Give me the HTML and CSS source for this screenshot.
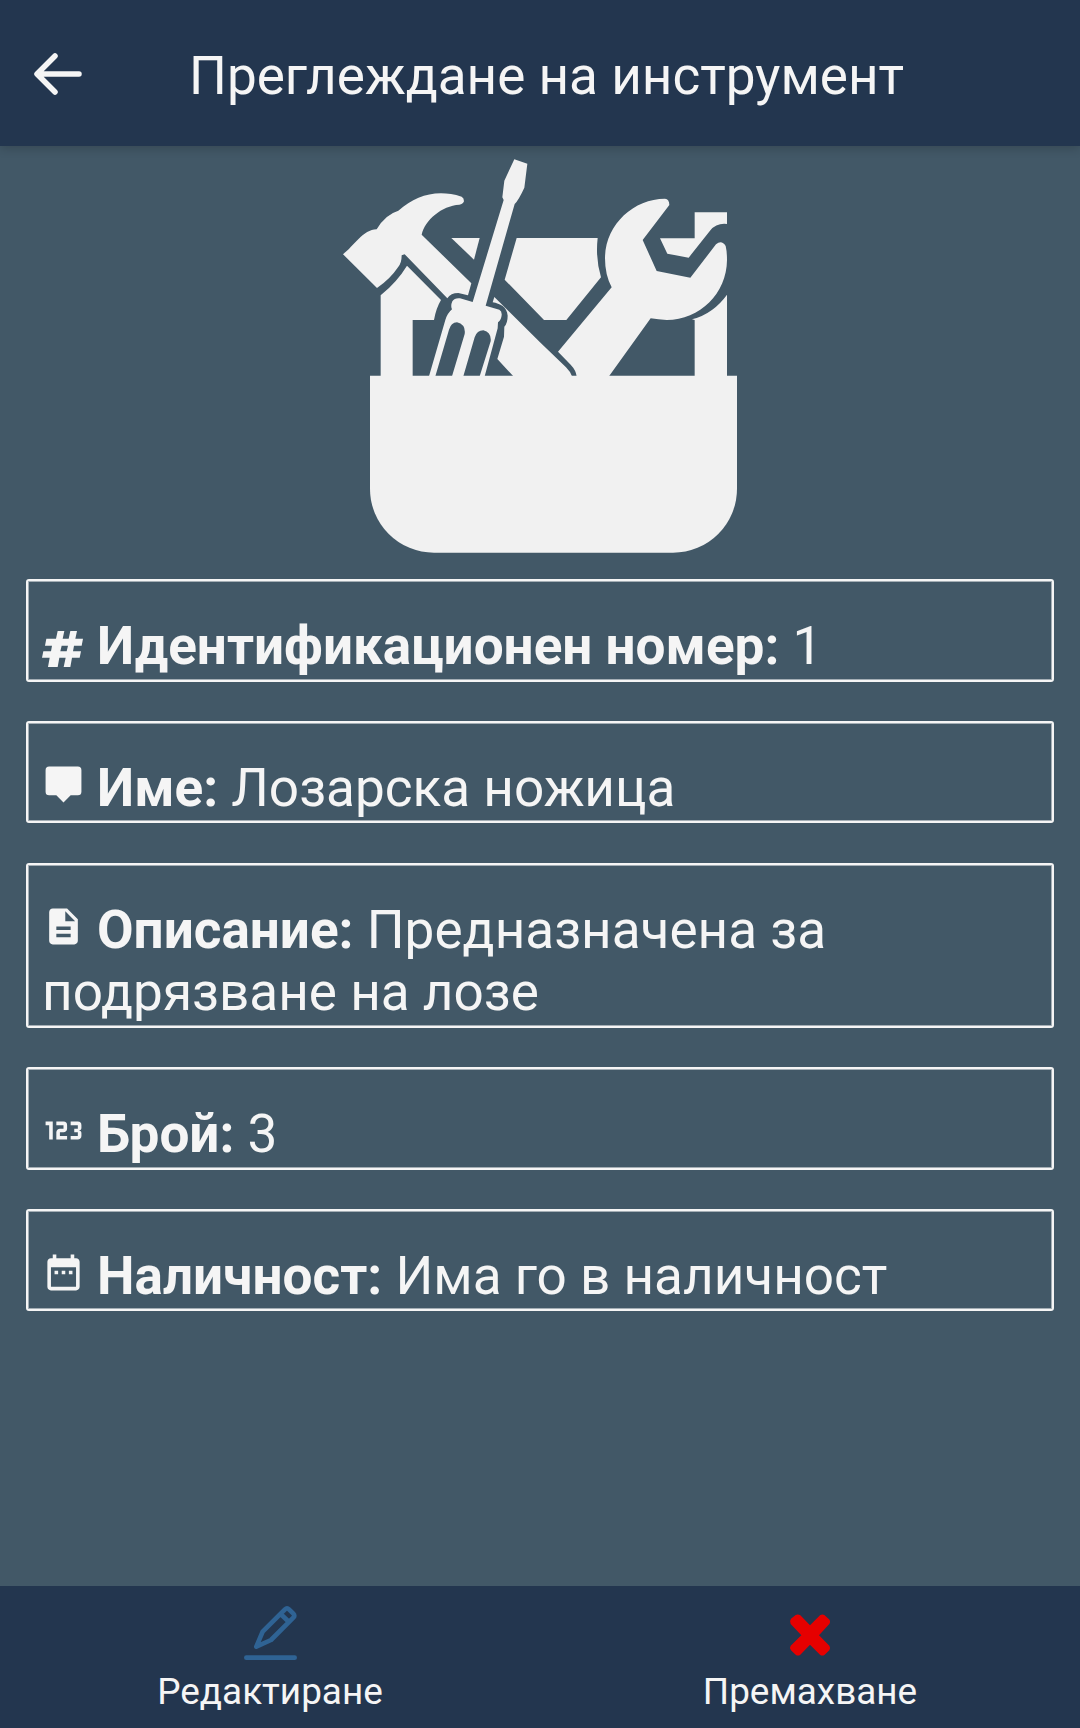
FILE: index.html
```html
<!DOCTYPE html>
<html lang="bg">
<head>
<meta charset="utf-8">
<title>Преглеждане на инструмент</title>
<link rel="stylesheet" href="styles.css">
</head>
<body>
<div class="screen">
  <header class="header">
    <svg class="back" viewBox="0 0 48 42" width="48" height="42"><path d="M21 3L3 21L21 39M4 21H45"/></svg>
    <h1 class="title">Преглеждане на инструмент</h1>
  </header>
  <main class="content">
    <svg class="toolbox" viewBox="0 18 1260 1299" width="420" height="433">
      <path d="M120 707H1221V1046A192 192 0 0 1 1029 1238H312A192 192 0 0 1 120 1046Z"/>
      <path d="M553 58L592 71L583 143Q566 180 554 192L467 497L508 509Q516 513 515 525Q514 540 504 547L503 565L464 709H449L482 604Q485 578 460 571Q441 571 434 592L400 709H366L404 582Q408 554 381 547Q363 548 357 569L316 709H297L346 540Q352 520 366 508Q361 498 367 484Q374 473 390 475L428 486L521 180L517 172L523 122Z"/>
      <path d="M39 343C72 318 99 269 140 268Q165 224 205 212C260 165 320 147 395 170Q402 174 402 184Q399 193 388 194C335 197 285 240 275 284L424 430L414 466L385 459Q362 459 352 475L224 343L215 346Q215 370 204 382Q180 418 141 444Z"/>
      <path d="M152 466Q202 425 231 377L333 480Q318 505 312 540H248V709H152Z"/>
      <path d="M364 294H449L432 359Z"/>
      <path d="M560 294H803Q796 355 813 412L709 540H642L524 419Z"/>
      <path d="M493 471L630 607L708 682Q722 696 726 709H550L502 657L522 590L523 560Q533 549 533 527C531 500 510 491 488 487Z"/>
      <path d="M740 709Q738 691 722 674L684 635L845 442Q825 405 825 355C825 255 910 176 1005 176Q1018 177 1018 195L938 300L980 393L1081 413L1158 313Q1175 299 1187 318Q1191 335 1191 360C1190 460 1110 540 1010 540Q985 539 962 535L837 709Z"/>
      <path d="M1094 709V540L1086 538Q1150 521 1191 464V709Z"/>
      <path d="M990 295H1094V217H1191V252Q1160 248 1140 272L1076 353L1012 341Z"/>
    </svg>
    <div class="cards">
      <p class="card"><svg class="icon icon-hash" viewBox="0 0 129 129" width="43" height="43"><path d="M47 21H67L62 44H80L85 21H105L100 44H123L119 65H96L93 82H117L113 101H90L85 129H65L71 101H52L47 129H18L23 101H0L4 82H27L30 65H9L13 44H42ZM59 65L55 82H74L78 65Z"/></svg><b>Идентификационен номер:</b> 1</p>
      <p class="card"><svg class="icon" viewBox="0 0 24 24" width="43" height="43"><path d="M4 2H20A2 2 0 0 1 22 4V16A2 2 0 0 1 20 18H16L12 22L8 18H4A2 2 0 0 1 2 16V4A2 2 0 0 1 4 2Z"/></svg><b>Име:</b> Лозарска ножица</p>
      <p class="card"><svg class="icon" viewBox="0 0 24 24" width="43" height="43"><path d="M14 2H6c-1.1 0-1.99.9-1.99 2L4 20c0 1.1.89 2 1.99 2H18c1.1 0 2-.9 2-2V8l-6-6zm2 16H8v-2h8v2zm0-4H8v-2h8v2zm-3-5V3.5L18.5 9H13z"/></svg><b>Описание:</b> Предназначена за подрязване на лозе</p>
      <p class="card"><svg class="icon" viewBox="0 0 24 24" width="43" height="43"><path d="M4 17V9H2V7H6V17H4M22 15C22 16.11 21.1 17 20 17H16V15H20V13H18V11H20V9H16V7H20A2 2 0 0 1 22 9V10.5A1.5 1.5 0 0 1 20.5 12A1.5 1.5 0 0 1 22 13.5V15M14 15V17H8V13C8 11.89 8.9 11 10 11H12V9H8V7H12A2 2 0 0 1 14 9V11C14 12.11 13.1 13 12 13H10V15H14Z"/></svg><b>Брой:</b> 3</p>
      <p class="card"><svg class="icon" viewBox="0 0 24 24" width="43" height="43"><path d="M9 11H7v2h2v-2zm4 0h-2v2h2v-2zm4 0h-2v2h2v-2zm2-7h-1V2h-2v2H8V2H6v2H5c-1.11 0-1.99.9-1.99 2L3 20c0 1.1.89 2 2 2h14c1.1 0 2-.9 2-2V6c0-1.1-.9-2-2-2zm0 16H5V9h14v11z"/></svg><b>Наличност:</b> Има го в наличност</p>
    </div>
  </main>
  <nav class="tabs">
    <div class="tab">
      <svg class="edit" viewBox="-2 0 162 165" width="54" height="55"><path d="M8 158H153M38 125L57 80L124 13Q130 7 136 13L149 26Q155 32 149 38L82 105ZM111 27L136 51"/></svg>
      <span>Редактиране</span>
    </div>
    <div class="tab">
      <svg class="remove" viewBox="0 0 162 165" width="54" height="55"><path d="M24 41L38 30Q45 26 52 31L81 61L111 31Q118 26 124 30L138 43Q144 49 139 57L108 91L139 122Q144 129 139 136L125 149Q118 154 111 149L81 119L52 149Q45 154 38 149L24 136Q18 129 23 122L55 91L23 57Q18 49 24 41Z"/></svg>
      <span>Премахване</span>
    </div>
  </nav>
</div>
</body>
</html>
```
FILE: styles.css
```css
body {
  margin: 0;
  font-family: Roboto, sans-serif;
  color: #f5f5f5;
  background: #425867;
}
.screen {
  display: flex;
  flex-direction: column;
  height: 1728px;
}
.header {
  display: flex;
  align-items: center;
  height: 146px;
  padding: 5px 34px 0;
  box-sizing: border-box;
  background: #23364f;
  box-shadow: 0 2px 10px rgba(0, 0, 0, 0.2);
}
.back {
  margin-bottom: 3px;
  fill: none;
  stroke: #f5f5f5;
  stroke-width: 5.5;
  stroke-linecap: round;
  stroke-linejoin: round;
}
.title {
  margin: 0 0 0 107px;
  font-size: 53.1px;
  font-weight: 400;
  line-height: 64px;
  white-space: nowrap;
}
.content {
  flex: 1;
  display: flex;
  flex-direction: column;
}
.toolbox {
  display: block;
  margin: 0 0 0.3px 330px;
  fill: #f1f1f1;
}
.cards {
  display: flex;
  flex-direction: column;
  gap: 39.6px;
  padding: 0 26px;
}
.card {
  margin: 0;
  padding: 34px 14px 2px;
  border: 2px solid #f5f5f5;
  border-radius: 3px;
  box-shadow: inset 0 0 0 1px rgba(245, 245, 245, 0.55);
  font-size: 53.1px;
  line-height: 62.3px;
}
.icon {
  margin-right: 12px;
  fill: #f5f5f5;
}
.icon-hash {
  margin-bottom: -3px;
}
.tabs {
  display: flex;
  height: 142px;
  background: #23364f;
}
.tab {
  flex: 1;
  display: flex;
  flex-direction: column;
  align-items: center;
  padding-top: 19px;
  font-size: 36.9px;
  line-height: 44px;
}
.tab span {
  margin-top: 10px;
}
.edit {
  fill: none;
  stroke: #2f6394;
  stroke-width: 14;
  stroke-linecap: round;
  stroke-linejoin: round;
}
.remove {
  fill: #e60000;
}
```
